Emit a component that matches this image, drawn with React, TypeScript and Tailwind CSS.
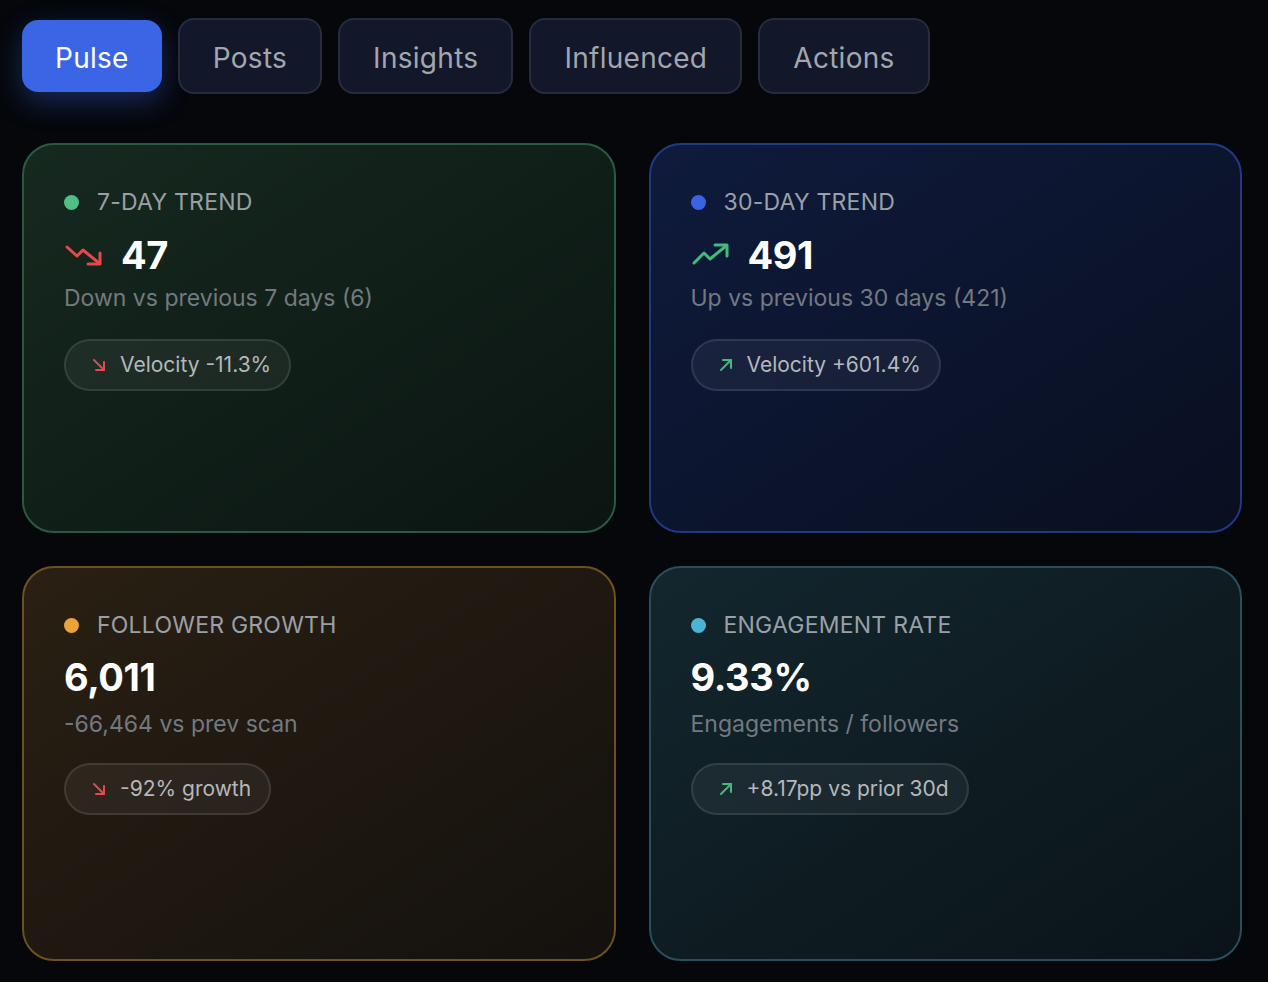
import React from 'react';

const tabs = ['Pulse', 'Posts', 'Insights', 'Influenced', 'Actions'];

type Tone = 'up' | 'down';

interface Card {
  label: string;
  dot: string;
  value: string;
  trend?: Tone;
  sub: string;
  pill: string;
  pillTone: Tone;
  box: string;
}

const cards: Card[] = [
  {
    label: '7-Day Trend',
    dot: 'bg-[#4fbf83]',
    value: '47',
    trend: 'down',
    sub: 'Down vs previous 7 days (6)',
    pill: 'Velocity -11.3%',
    pillTone: 'down',
    box: 'h-[390px] border-[#2b5a43] bg-gradient-to-br from-[#16291f] to-[#0b1512]',
  },
  {
    label: '30-Day Trend',
    dot: 'bg-[#3b63e6]',
    value: '491',
    trend: 'up',
    sub: 'Up vs previous 30 days (421)',
    pill: 'Velocity +601.4%',
    pillTone: 'up',
    box: 'h-[390px] border-[#1f3a85] bg-gradient-to-br from-[#0f1b3d] to-[#090f20]',
  },
  {
    label: 'Follower Growth',
    dot: 'bg-[#eba23a]',
    value: '6,011',
    sub: '-66,464 vs prev scan',
    pill: '-92% growth',
    pillTone: 'down',
    box: 'h-[395px] border-[#70501f] bg-gradient-to-br from-[#2a2013] to-[#14110e]',
  },
  {
    label: 'Engagement Rate',
    dot: 'bg-[#4bb3d6]',
    value: '9.33%',
    sub: 'Engagements / followers',
    pill: '+8.17pp vs prior 30d',
    pillTone: 'up',
    box: 'h-[395px] border-[#27505f] bg-gradient-to-br from-[#13262e] to-[#0a1418]',
  },
];

const TrendIcon = ({ tone }: { tone: Tone }) =>
  tone === 'down' ? (
    <svg width="40" height="28" viewBox="0 0 40 28" fill="none" stroke="#e5484d" strokeWidth="3" strokeLinecap="round" strokeLinejoin="round">
      <path d="M3 6 L13 15 L19 9 L35 22" />
      <path d="M24 23 H36 V12" />
    </svg>
  ) : (
    <svg width="40" height="28" viewBox="0 0 40 28" fill="none" stroke="#45b97c" strokeWidth="3" strokeLinecap="round" strokeLinejoin="round">
      <path d="M3 22 L13 12 L19 18 L35 5" />
      <path d="M24 4 H36 V15" />
    </svg>
  );

const SmallArrow = ({ tone }: { tone: Tone }) =>
  tone === 'down' ? (
    <svg width="14" height="14" viewBox="0 0 14 14" fill="none" stroke="#e5484d" strokeWidth="2" strokeLinecap="round" strokeLinejoin="round">
      <path d="M2 2 L12 12" />
      <path d="M12 4 V12 H4" />
    </svg>
  ) : (
    <svg width="14" height="14" viewBox="0 0 14 14" fill="none" stroke="#45b97c" strokeWidth="2" strokeLinecap="round" strokeLinejoin="round">
      <path d="M2 12 L12 2" />
      <path d="M4 2 H12 V10" />
    </svg>
  );

export default function App() {
  return (
    <div
      className="min-h-screen w-full bg-[#05070b] pl-[22px] pr-[26px] pt-[20px]"
      style={{ fontFamily: 'Inter, "Noto Sans", sans-serif' }}
    >
      <div className="flex items-start gap-4">
        {tabs.map((t, i) => (
          <button
            key={t}
            className={
              i === 0
                ? 'h-[72px] rounded-2xl bg-[#3a66e5] px-[33px] pt-[3px] text-[28px] tracking-[0.01em] text-white shadow-[0_10px_28px_rgba(59,102,229,0.35)]'
                : 'h-[76px] -mt-[2px] rounded-2xl border-2 border-[#262c3d] bg-[#121729] px-[33px] pt-[3px] text-[28px] tracking-[0.01em] text-[#a3a6ae]'
            }
          >
            {t}
          </button>
        ))}
      </div>

      <div className="mt-[49px] grid grid-cols-2 gap-x-[33px] gap-y-[33px]">
        {cards.map((c) => (
          <div key={c.label} className={`rounded-[32px] border-2 pl-[40px] pt-[40px] ${c.box}`}>
            <div className="flex items-center gap-[18px]">
              <span className={`h-[15px] w-[15px] rounded-full ${c.dot}`} />
              <span className="text-[23px] uppercase tracking-[0.01em] text-[#9aa0a6]">{c.label}</span>
            </div>
            <div className={c.trend ? 'mt-[10px] flex items-center gap-[17px]' : 'mt-[9px] flex items-center gap-[17px]'}>
              {c.trend && <TrendIcon tone={c.trend} />}
              <span className="text-[38px] font-bold leading-[50px] tracking-[-0.01em] text-white">{c.value}</span>
            </div>
            <div className={c.trend ? 'mt-[1px] text-[23px] text-[#737980]' : 'mt-[5px] text-[23px] text-[#737980]'}>{c.sub}</div>
            <div
              className={
                (c.trend ? 'mt-[24px] ' : 'mt-[22px] ') +
                'inline-flex h-[52px] items-center gap-[14px] rounded-full border-2 border-white/10 bg-white/[0.05] pl-[26px] pr-[18px]'
              }
            >
              <SmallArrow tone={c.pillTone} />
              <span className="text-[21px] text-[#b4b8bd]">{c.pill}</span>
            </div>
          </div>
        ))}
      </div>
    </div>
  );
}
